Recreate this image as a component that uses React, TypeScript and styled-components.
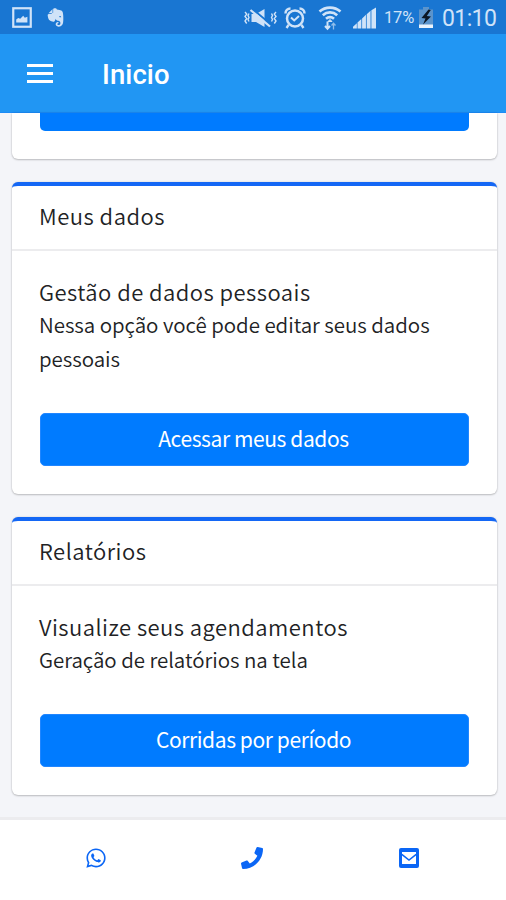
import React from "react";
import styled, { createGlobalStyle } from "styled-components";
import { FaEvernote, FaPhone, FaWhatsapp } from "react-icons/fa";

const GlobalStyle = createGlobalStyle`
  * { box-sizing: border-box; }
  html, body { margin: 0; padding: 0; }
  body { background: #f4f5f9; overflow: hidden; }
`;

const Screen = styled.div`
  width: 506px;
  height: 900px;
  display: flex;
  flex-direction: column;
  background: #f4f5f9;
  color: #212224;
  font-family: "Noto Sans CJK JP", "Noto Sans CJK SC", "Noto Sans", sans-serif;
  overflow: hidden;
`;

const StatusBar = styled.header`
  flex: 0 0 34px;
  height: 34px;
  display: flex;
  align-items: center;
  padding: 1px 9px 0 12px;
  background: #1976d2;
  color: #d0e3f8;
  font-family: Roboto, sans-serif;
  svg { display: block; flex: none; }
`;

const Notifications = styled.div`
  display: flex;
  gap: 13px;
  flex: 1;
`;

const Indicators = styled.div`
  display: flex;
  align-items: center;
`;

const Percent = styled.span`
  width: 31px;
  margin-left: 8px;
  font-size: 16.5px;
  line-height: 32px;
  letter-spacing: -0.2px;
  white-space: nowrap;
`;

const Clock = styled.span`
  margin-left: 9px;
  padding-top: 2px;
  width: 55px;
  font-size: 23px;
  line-height: 30px;
  letter-spacing: -0.6px;
  white-space: nowrap;
`;

const AppBar = styled.nav`
  flex: 0 0 79px;
  display: flex;
  align-items: center;
  padding-left: 27px;
  gap: 48px;
  background: #2196f3;
  border-bottom: 1px solid #1c8bf6;
`;

const MenuButton = styled.button`
  display: flex;
  flex-direction: column;
  gap: 5px;
  width: 26px;
  padding: 0;
  margin: 1px 1px 0 0;
  border: 0;
  background: none;
`;

const MenuLine = styled.span`
  height: 3px;
  background: #fff;
`;

const PageTitle = styled.h1`
  margin: 4px 0 0;
  color: #fff;
  font: 500 27.5px/32px Roboto, sans-serif;
  letter-spacing: 0.1px;
`;

const Content = styled.main`
  flex: 1;
  min-height: 0;
  display: flex;
  flex-direction: column;
  gap: 23px;
  padding: 0 9px 0 12px;
`;

const Card = styled.section<{ $height: number }>`
  flex: 0 0 ${(p) => p.$height}px;
  background: #fff;
  border-top: 4px solid #1467f5;
  border-radius: 6px;
  box-shadow: 0 0 2px rgba(0, 0, 0, 0.15), 0 1px 2px rgba(0, 0, 0, 0.2);
`;

const PartialCard = styled(Card)`
  border-top: 0;
  border-radius: 0 0 6px 6px;
  padding: 0 28px;
`;

const CardHeader = styled.h2`
  height: 65px;
  margin: 0;
  padding: 0 27px;
  border-bottom: 2px solid #ececee;
  font-size: 22px;
  font-weight: 350;
  line-height: 59px;
  letter-spacing: 0.5px;
`;

const CardBody = styled.div`
  padding: 25px 28px 0 27px;
`;

const Heading = styled.h3`
  margin: 0;
  font-size: 22px;
  font-weight: 350;
  line-height: 31px;
  letter-spacing: 0.47px;
  white-space: nowrap;
`;

const Description = styled.p`
  margin: 0 0 38px;
  font-size: 20.5px;
  font-weight: 350;
  line-height: 34px;
  letter-spacing: -0.04px;
`;

const ActionButton = styled.button`
  display: block;
  width: 429px;
  height: 53px;
  margin-left: 1px;
  padding: 0 2px 3px 0;
  border: 1px solid #2186ff;
  border-radius: 5px;
  background: #007bff;
  color: #fff;
  font-family: inherit;
  font-size: 21px;
  font-weight: 400;
  line-height: 48px;
  letter-spacing: -0.4px;
`;

const ClippedButton = styled.div`
  height: 18px;
  width: 429px;
  background: #007bff;
  border-radius: 0 0 5px 5px;
`;

const Footer = styled.footer`
  flex: 0 0 83px;
  display: grid;
  grid-template-columns: 192px 120px 194px;
  justify-items: center;
  align-items: center;
  padding-bottom: 4px;
  border-top: 3px solid #ececef;
  background: #fff;
  color: #0b66f5;
  svg { display: block; }
`;

const PictureIcon = () => (
  <svg width="20" height="21" viewBox="0 0 20 21" fill="none">
    <rect x="1.25" y="1.25" width="17.5" height="18.5" stroke="currentColor" strokeWidth="2.2" />
    <path d="M4.2 15.5v-3l2-1.6 2 .8 3-3 1.6 2 2.6-1v5.8z" fill="currentColor" />
  </svg>
);

const VibrateIcon = () => (
  <svg width="33" height="20" viewBox="0 0 33 20" fill="none" stroke="currentColor">
    <path d="M7.5 6h4.5l8.5-5v18L12 14H7.5z" fill="currentColor" stroke="none" />
    <path d="M8.500 1l19 16" stroke="#1976d2" strokeWidth="2" />
    <path d="M6.500 2l19.500 16.500" strokeWidth="2.200" />
    <path d="M1 4l1.700 2L1 8.500l1.700 2L1 13l1.700 2.500M5 5.500l-1 2 1 2-1 2 1 2M32 4l-1.700 2L32 8.500l-1.700 2L32 13l-1.700 2.500M27.500 5.500l1 2-1 2 1 2-1 2" strokeWidth="1.400" />
  </svg>
);

const AlarmIcon = () => (
  <svg width="22" height="22" viewBox="0 0 22 22" fill="none" stroke="currentColor">
    <circle cx="11" cy="11.500" r="8" strokeWidth="2.500" />
    <path d="M1.500 6.500c0-3 2-5 5-5M20.500 6.500c0-3-2-5-5-5" strokeWidth="2.500" />
    <path d="M7 10.500l3.200 3 4.800-4.500" strokeWidth="2" />
    <path d="M4.500 18L2.500 21M17.500 18l2 3" strokeWidth="2.300" />
  </svg>
);

const WifiIcon = () => (
  <svg width="24" height="26" viewBox="0 0 24 26" fill="none" stroke="currentColor">
    <path d="M1.500 6.500c6-5.200 15-5.200 21 0M4.800 10.200c4.200-3.700 10.200-3.700 14.400 0M8 13.700c2.400-2 5.600-2 8 0" strokeWidth="2.700" />
    <path d="M12 14.500l-2 2h4z" fill="currentColor" />
    <path d="M9.500 16.500v7M7 21l2.500 2.700L12 21" strokeWidth="2" />
    <path d="M15.500 24.500v-6M13.500 20.500l2-2.300 2 2.300" strokeWidth="1.300" opacity=".65" />
  </svg>
);

const SignalIcon = () => (
  <svg width="23" height="22" viewBox="0 0 24 22" fill="currentColor">
    <path d="M0 22v-2l4-3.500V22zM4.700 22v-6.200L8.700 12v10zM9.500 22V11.500l4-3.800V22zM14.300 22V7l4-3.500V22zM19.200 22V3L24 0v22z" />
  </svg>
);

const BatteryIcon = () => (
  <svg width="14" height="21" viewBox="0 0 14 21">
    <path d="M4 0h6v2.500h4V21H0V2.500h4z" fill="#5b94cc" />
    <path d="M0 17.500h14V21H0z" fill="#e9f3fd" />
    <path d="M9.500 2.500L2.500 11l4 .5L4 17.500l8-8-4.200-.5 4-6z" fill="#0b1624" />
  </svg>
);

const MailIcon = () => (
  <svg width="20" height="20" viewBox="0 0 20 20" fill="none">
    <rect width="20" height="20" rx="2" fill="currentColor" />
    <rect x="3" y="4" width="14" height="12" fill="#fff" />
    <path d="M2.800 6.300L10 12l7.200-5.700" stroke="currentColor" strokeWidth="1.500" />
  </svg>
);

const IconSlot = styled.span<{ $left?: number; $top?: number }>`
  display: block;
  margin-left: ${(p) => p.$left ?? 0}px;
  margin-top: ${(p) => p.$top ?? 0}px;
`;

const cards = [
  {
    title: "Meus dados",
    heading: "Gestão de dados pessoais",
    text: "Nessa opção você pode editar seus dados pessoais",
    action: "Acessar meus dados",
    height: 312,
  },
  {
    title: "Relatórios",
    heading: "Visualize seus agendamentos",
    text: "Geração de relatórios na tela",
    action: "Corridas por período",
    height: 278,
  },
];

export default function App() {
  return (
    <>
      <GlobalStyle />
      <Screen>
        <StatusBar>
          <Notifications>
            <PictureIcon />
            <FaEvernote size={21} />
          </Notifications>
          <Indicators>
            <VibrateIcon />
            <IconSlot $left={7}><AlarmIcon /></IconSlot>
            <IconSlot $left={12} $top={1}><WifiIcon /></IconSlot>
            <IconSlot $left={11}><SignalIcon /></IconSlot>
            <Percent>17%</Percent>
            <IconSlot $left={4}><BatteryIcon /></IconSlot>
            <Clock>01:10</Clock>
          </Indicators>
        </StatusBar>
        <AppBar>
          <MenuButton aria-label="Menu">
            <MenuLine />
            <MenuLine />
            <MenuLine />
          </MenuButton>
          <PageTitle>Inicio</PageTitle>
        </AppBar>
        <Content>
          <PartialCard $height={46}>
            <ClippedButton />
          </PartialCard>
          {cards.map((card) => (
            <Card key={card.title} $height={card.height}>
              <CardHeader>{card.title}</CardHeader>
              <CardBody>
                <Heading>{card.heading}</Heading>
                <Description>{card.text}</Description>
                <ActionButton>{card.action}</ActionButton>
              </CardBody>
            </Card>
          ))}
        </Content>
        <Footer>
          <FaWhatsapp size={22} />
          <FaPhone size={22} />
          <MailIcon />
        </Footer>
      </Screen>
    </>
  );
}
